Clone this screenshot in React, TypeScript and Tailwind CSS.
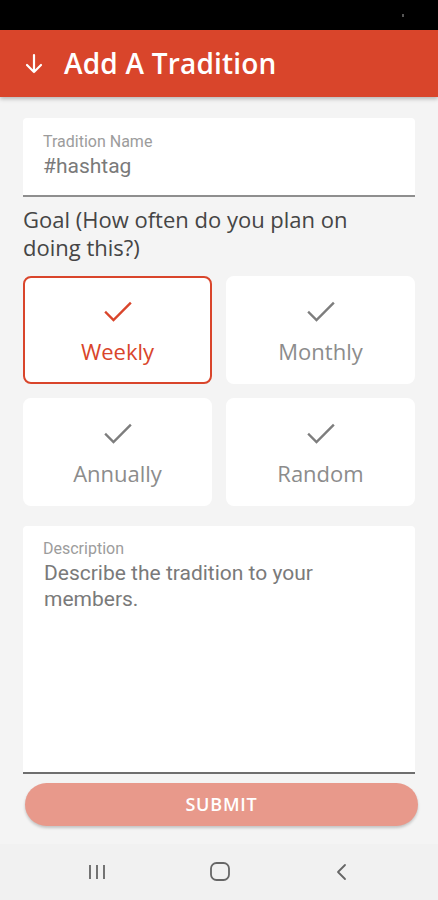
import React from "react";

const OPEN = { fontFamily: '"Open Sans", "Noto Sans", sans-serif' };
const ROBOTO = { fontFamily: 'Roboto, "Noto Sans", sans-serif' };

const goals = ["Weekly", "Monthly", "Annually", "Random"];

function Check({ color }: { color: string }) {
  return (
    <svg width="30" height="24" viewBox="0 0 30 24" fill="none">
      <path d="M3 12.5l7.5 7.5L27 3.5" stroke={color} strokeWidth="2.4" strokeLinecap="square" />
    </svg>
  );
}

export default function App() {
  const selected = "Weekly";

  return (
    <div className="w-[438px] h-[900px] bg-[#f4f4f4] flex flex-col overflow-hidden">
      {/* status bar */}
      <div className="h-[30px] bg-black flex items-center justify-end pr-[34px]">
        <div className="w-[2px] h-[3px] bg-[#555]" />
      </div>

      {/* app bar */}
      <div className="h-[67px] bg-[#d9452b] flex items-center pl-[24px] gap-[20px] shadow-[0_2px_4px_rgba(0,0,0,0.25)] relative">
        <svg width="20" height="22" viewBox="0 0 20 22" fill="none">
          <path d="M10 2v17M3 12l7 7 7-7" stroke="white" strokeWidth="2.2" strokeLinecap="round" strokeLinejoin="round" />
        </svg>
        <span className="text-white text-[28px] font-semibold tracking-[0.2px] pb-[2px]" style={OPEN}>
          Add A Tradition
        </span>
      </div>

      <div className="flex-1 flex flex-col px-[23px] pt-[21px]">
        {/* tradition name */}
        <div className="bg-white rounded-t-[4px] h-[79px] border-b-[2px] border-[#8e8e8e] px-[20px] pt-[15px]" style={ROBOTO}>
          <div className="text-[16px] leading-[18px] text-[#9c9c9c]">Tradition Name</div>
          <div className="text-[21px] leading-[26px] mt-[2px] text-[#7a7a7a]">#hashtag</div>
        </div>

        <div className="mt-[8px] text-[22px] leading-[28px] text-[#454545] pr-[40px]" style={OPEN}>
          Goal (How often do you plan on doing this?)
        </div>

        {/* goal grid */}
        <div className="grid grid-cols-2 gap-x-[14px] gap-y-[14px] mt-[15px]">
          {goals.map((g) => {
            const active = g === selected;
            return (
              <div
                key={g}
                className={
                  active
                    ? "h-[108px] bg-white rounded-[8px] border-[2px] border-[#d9452b] flex flex-col items-center pt-[22px]"
                    : "h-[108px] bg-white rounded-[8px] border-[2px] border-white flex flex-col items-center pt-[22px]"
                }
              >
                <Check color={active ? "#d9452b" : "#7d7d7d"} />
                <span
                  className={active ? "mt-[12px] text-[22px] leading-[30px] text-[#d9452b]" : "mt-[12px] text-[22px] leading-[30px] text-[#8c8c8c]"}
                  style={OPEN}
                >
                  {g}
                </span>
              </div>
            );
          })}
        </div>

        {/* description */}
        <div className="mt-[20px] bg-white rounded-t-[4px] h-[248px] border-b-[2px] border-[#6e6e6e] px-[20px] pt-[14px]" style={ROBOTO}>
          <div className="text-[16px] leading-[18px] text-[#9c9c9c]">Description</div>
          <div className="text-[21px] leading-[26px] mt-[2px] ml-[1px] text-[#7a7a7a] pr-[40px]">
            Describe the tradition to your members.
          </div>
        </div>

        {/* submit */}
        <div className="mt-[9px] ml-[2px] mr-[-3px] h-[43px] rounded-full bg-[#e8998b] shadow-[0_2px_3px_rgba(0,0,0,0.2)] flex items-center justify-center">
          <span className="text-white text-[18px] font-semibold tracking-[0.8px]" style={OPEN}>
            SUBMIT
          </span>
        </div>
      </div>

      {/* nav bar */}
      <div className="h-[56px] bg-[#f1f1f1] flex items-center pl-[86px]">
        <svg width="22" height="18" viewBox="0 0 22 18" fill="none">
          <path d="M4 2v14M11 2v14M18 2v14" stroke="#666" strokeWidth="1.8" />
        </svg>
        <svg className="ml-[101px]" width="22" height="22" viewBox="0 0 22 22" fill="none">
          <rect x="2" y="2" width="18" height="17" rx="5.5" stroke="#666" strokeWidth="1.8" />
        </svg>
        <svg className="ml-[99px]" width="22" height="22" viewBox="0 0 22 22" fill="none">
          <path d="M15 4l-7 7 7 7" stroke="#666" strokeWidth="1.8" strokeLinecap="round" strokeLinejoin="round" />
        </svg>
      </div>
    </div>
  );
}
